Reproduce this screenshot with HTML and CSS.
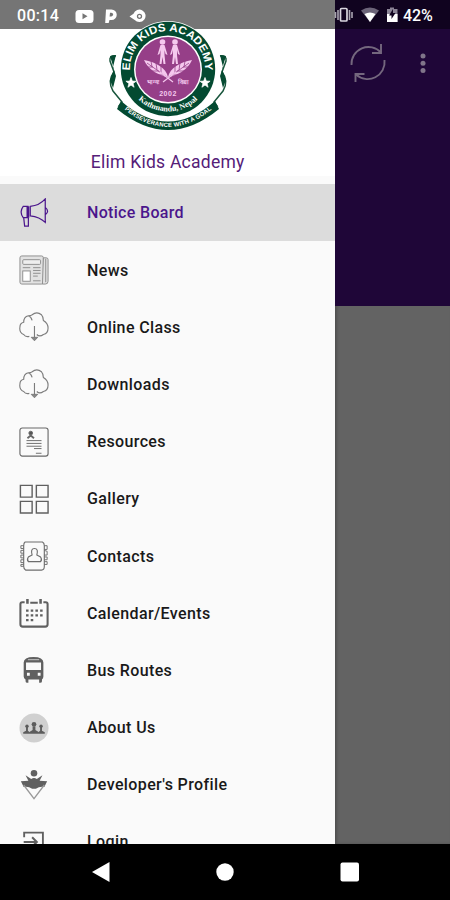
FILE: index.html
```html
<!DOCTYPE html>
<html lang="en">
<head>
<meta charset="utf-8">
<title>Elim Kids Academy</title>
<link rel="stylesheet" href="styles.css">
</head>
<body>
<div class="screen">
  <div class="content">
    <aside class="drawer">
      <div class="status status-left">
        <span class="clock">00:14</span>
        <svg class="notif" width="74" height="18" viewBox="74 6 74 18" fill="#fff">
          <rect x="75.500" y="9" width="18" height="13" rx="3.500"/><path d="M82.500 12.300v6l5-3z" fill="#757575"/>
          <path d="M106 8.500h5.500a5 5 0 0 1 0 10.500h-2l-.8 3h-3.500z"/><path d="M110 11.800h1.300a1.600 1.600 0 0 1 0 3.600h-1.700z" fill="#757575"/>
          <path d="M129.500 15.500l4-2.800a6.200 6.200 0 1 1 1.200 6.200z"/><circle cx="139.500" cy="15.300" r="2" fill="none" stroke="#757575" stroke-width="1.300"/>
        </svg>
      </div>
      <header class="brand">
        <svg class="logo" width="136" height="120" viewBox="100 15 136 120">
          <defs>
            <path id="name-arc" d="M136 89A37.500 37.500 0 1 1 199 89"/>
            <path id="place-arc" d="M130 88A42.500 42.500 0 0 0 206 88"/>
            <path id="motto-arc" d="M119 105Q168 149 217 105"/>
            <g id="child"><circle cx="0" cy="0" r="2.800"/><path d="M-2 3h4l3 10-2-1-1-4v5l1 9H1l-1-7-1 7h-2l1-9V8l-1 4-2 1z"/></g>
            <g id="feather"><path d="M0 0C-8-1-20-7-24-17C-12-15-2-9 0 0z"/><path d="M3 3L-21-14M-17-16l1 6m4-4l1 7m4-4v7M-21-10l6 0m-1 4h7m-2 4h7" stroke="#963f88" stroke-width=".8" fill="none"/><path d="M5 5L-8-5" stroke="#f5c9ee" stroke-width="1.200"/></g>
          </defs>
          <path d="M116 56q-7-1-6 5l4 11q-7 9-1 19l9 11-3 4 8 1M220 56q7-1 6 5l-4 11q7 9 1 19l-9 11 3 4-8 1" fill="#fff" stroke="#18553c" stroke-width="1.500"/>
          <path d="M116 55l-6 1 4 13-4 11 3 8 3-12-3-9zM220 55l6 1-4 13 4 11-3 8-3-12 3-9z" fill="#064b32"/>
          <path d="M121 101Q168 142 215 101L219 109Q168 151 117 109z" fill="#034a31"/>
          <circle cx="168" cy="69" r="48" fill="#fff"/>
          <circle cx="168" cy="69" r="47.200" fill="#034a31"/>
          <circle cx="168" cy="69.500" r="34" fill="#fff"/>
          <circle cx="168" cy="69.500" r="32.500" fill="#963f88"/>
          <text class="logo-name"><textPath href="#name-arc" startOffset="50%" text-anchor="middle" textLength="121" lengthAdjust="spacingAndGlyphs">ELIM KIDS ACADEMY</textPath></text>
          <text class="logo-place"><textPath href="#place-arc" startOffset="50%" text-anchor="middle">Kathmandu, Nepal</textPath></text>
          <text class="logo-motto"><textPath href="#motto-arc" startOffset="50%" text-anchor="middle" textLength="96">PERSEVERANCE WITH A GOAL</textPath></text>
          <path d="M131 77.500l1.300 3.600 3.800.1-3 2.400 1 3.700-3.100-2.200-3.100 2.200 1-3.700-3-2.400 3.800-.1zM205 77.500l1.300 3.600 3.800.1-3 2.400 1 3.700-3.100-2.200-3.100 2.200 1-3.700-3-2.400 3.800-.1z" fill="#fff" stroke="#fff" stroke-width=".7"/>
          <g fill="#f5c9ee"><use href="#child" x="162.500" y="42"/><use href="#child" x="175" y="42"/>
          <use href="#feather" transform="translate(168 77)"/><use href="#feather" transform="matrix(-1 0 0 1 168 77)"/></g>
          <text class="logo-small" x="153" y="84">भाग्यः</text><text class="logo-small" x="183" y="84">विद्या</text>
          <text class="logo-year" x="168" y="95.500">2002</text>
        </svg>
        <h1>Elim Kids Academy</h1>
      </header>
      <nav class="menu">
        <a class="item active"><svg viewBox="0 0 32 32" fill="none" stroke="#4b168c" stroke-width="1.300"><path d="M4.500 9h5v12h-5q-4.500-6 0-12zM12 9q10-1 16-8v25q-6-6-16-7zM28 10q5 4 0 8M5 21l1 9h4v-9"/><path d="M9.500 9v12" stroke-width="3"/></svg><span>Notice Board</span></a>
        <a class="item"><svg viewBox="0 0 32 32" fill="#e2e2e2" stroke="#8c8c8c"><rect x="1" y="1" width="25" height="30" rx="2"/><path d="M26 3h3q2 0 2 2v23q0 3-3 3h-3zM28.500 4v25" /><rect x="4" y="5" width="19" height="5" rx="1" fill="#eee"/><rect x="4" y="17" width="8" height="11" fill="#fff"/><path d="M4 13.500h8m3 0h8m-8 3h8m-8 3h8m-8 3h5m-5 5h8"/></svg><span>News</span></a>
        <a class="item"><svg viewBox="0 0 32 32" fill="none" stroke="#7c7c7c"><use href="#cloud"/></svg><span>Online Class</span></a>
        <a class="item"><svg viewBox="0 0 32 32" fill="none" stroke="#7c7c7c"><g id="cloud"><path d="M11 26q-4 1-6-2-5-2-4-8 0-4 4-5 0-6 5-7 3 0 4-1 5-4 10 0 2 2 2 6 5 3 5 8 0 6-5 7-4 3-7 0M10 4q3 1 4 5M16.500 15v14" stroke-width="1.200"/><path d="M13 27l3.500 3.700L20 27z" fill="#888"/></g></svg><span>Downloads</span></a>
        <a class="item"><svg viewBox="0 0 32 32" fill="none" stroke="#686868"><rect x="1" y="1" width="30" height="30" rx="2.500" stroke-width="1.200"/><circle cx="12.500" cy="6.500" r="2" fill="#555"/><path d="M9 12l3.500-3 3.500 3" stroke-width="2"/><path d="M8 14.500h16m-16 3h16m-16 3h16m-8 2.500h8m-6 5h6"/></svg><span>Resources</span></a>
        <a class="item"><svg viewBox="0 0 32 32" fill="none" stroke="#606060" stroke-width="1.500"><path d="M1.500 1.500h12.500v12.500H1.500zM18.500 1.500h12.500v12.500H18.500zM1.500 18.500h12.500v12.500H1.500zM18.500 18.500h12.500v12.500H18.500z"/></svg><span>Gallery</span></a>
        <a class="item"><svg viewBox="0 0 32 32" fill="none" stroke="#6d6d6d"><path d="M6.500 1H25q2 1 2 4v22q0 4-3 4H7q-2-1-2-4V5q0-3 1.500-4z" stroke-width="1.200"/><path d="M5 5H2v3h3M5 10H2v3h3M5 15H2v3h3M5 20H2v3h3M5 25H2v2h3M27 5h3v4h-3M27 10l3 1v4h-3M27 17h3v3h-3M27 22h3v3h-3"/><path d="M14 15q-2-7 2.500-7t2.500 7l4 2q2 3 0 5H10q-2-2 0-5z" stroke-width="1.200"/></svg><span>Contacts</span></a>
        <a class="item"><svg viewBox="0 0 32 32" fill="none" stroke="#606060"><path d="M6 4.500H3.500q-2 0-2 2V28q0 2.500 2.500 2.500h24q2.500 0 2.500-2.500V6.500q0-2-2-2H26M12 5h8" stroke-width="2.200"/><path d="M9 1v5M23 1v5" stroke-width="2.700"/><path d="M7.500 13.500h18M7.500 18.500h18M7.500 23.500h8" stroke-width="2.400" stroke-dasharray="2.700 2.300"/></svg><span>Calendar/Events</span></a>
        <a class="item"><svg viewBox="0 0 32 32"><path fill="#606060" d="M5 8q0-6 10.500-6T26 8v15q0 2-1.500 3v2q0 2-3 1.500V26H10v3.500q-3 .5-3-1.500v-2Q5 25 5 23z"/><path fill="#fafafa" d="M7.500 8h16v8h-16zM8.500 19h3v3h-3zm11.500 0h3v3h-3z"/><path stroke="#ccc" d="M9.500 5h12"/></svg><span>Bus Routes</span></a>
        <a class="item"><svg viewBox="0 0 32 32"><circle cx="16" cy="16" r="15.500" fill="#d0d0d0"/><g fill="#5c5c5c"><circle cx="16" cy="12" r="2.500"/><circle cx="8.500" cy="14" r="1.800"/><circle cx="23.500" cy="14" r="1.800"/><path d="M14.500 14h3v4l3 2v2h-9v-2l3-2zM7.500 15h2v4l2 1.500V22H4.500v-1.500l3-1.500zM22.500 15h2v4l3 1.500V22h-7v-1.500l2-1.500z"/></g></svg><span>About Us</span></a>
        <a class="item"><svg viewBox="0 0 32 32"><g fill="#606060"><circle cx="16" cy="3.500" r="3.500"/><path d="M7 5.500l6 4q3-2 6 0l6-4-3 6 8 .5-3 6q-5-1-9 2h-4q-4-3-9-2l-3-6 8-.5z"/></g><path d="M5 16l11 14.500L27 16" fill="none" stroke="#999" stroke-width="1.400"/></svg><span>Developer's Profile</span></a>
        <a class="item"><svg viewBox="0 0 32 32" fill="none" stroke="#606060" stroke-width="2"><path d="M5.500 11V6h20v20h-20v-5"/><path d="M5 16h14m-5-5l5 5-5 5" stroke-width="2.200"/></svg><span>Login</span></a>
      </nav>
    </aside>
    <main class="behind">
      <div class="status status-right">
        <svg width="68" height="18" viewBox="332 6 68 18">
          <path d="M335.500 12v6M338 10v10M349.500 10v10M352 12v6" stroke="#aaa6b2" stroke-width="1.600"/><rect x="340.500" y="8.500" width="6.500" height="12.500" rx="1" fill="none" stroke="#d9d6df" stroke-width="1.700"/>
          <path d="M361 10.500q9-6 18 0l-9 11.500z" fill="#6c6479"/><path d="M364.500 14q5.500-3 11 0L370 22z" fill="#fff"/>
          <path d="M387 9h3V7.500h4V9h3.500v13H387z" fill="#8b8496"/><path d="M387 14h10.500v8H387z" fill="#fff"/><path d="M393 9l-4 6.500h2.500V19l4-6h-2.500z" fill="#10031f"/>
        </svg>
        <span class="battery">42%</span>
      </div>
      <div class="toolbar">
        <svg width="40" height="40" viewBox="0 0 40 40" fill="none" stroke="#74677e" stroke-width="1.900"><path d="M3.500 22A17 17 0 0 1 33 9.500M36.500 17A17 17 0 0 1 8 31.500"/><path d="M33 1v9h-9M7.500 39v-8h9"/></svg>
        <svg width="6" height="22" viewBox="0 0 6 22" fill="#80758a"><circle cx="3" cy="3" r="2.500"/><circle cx="3" cy="10.300" r="2.500"/><circle cx="3" cy="17.600" r="2.500"/></svg>
      </div>
    </main>
  </div>
  <footer class="navbar">
    <svg width="18" height="20" viewBox="0 0 18 20" fill="#fff"><path d="M17.500 0v20L0 10z"/></svg>
    <svg width="18" height="18" viewBox="0 0 18 18" fill="#fff"><circle cx="9" cy="9" r="8.700"/></svg>
    <svg width="20" height="20" viewBox="0 0 20 20" fill="#fff"><rect x=".5" y=".5" width="18.500" height="19" rx="2"/></svg>
  </footer>
</div>
</body>
</html>
```
FILE: styles.css
```css
* { box-sizing: border-box; }
body { margin: 0; font-family: Roboto, sans-serif; background: #000; }
svg { display: block; flex: none; }
.screen { width: 450px; height: 900px; display: flex; flex-direction: column; overflow: hidden; }
.content { display: flex; height: 844px; overflow: hidden; }
.drawer { width: 335.4px; height: 844px; flex: none; background: #fafafa; overflow: hidden; }
.status { height: 29px; display: flex; align-items: center; color: #fff; padding-top: 2px; }
.status-left { background: #757575; padding-left: 17px; }
.clock { width: 57px; font-size: 16px; font-weight: 500; letter-spacing: .3px; }
.brand { height: 154.6px; background: #fff; display: flex; flex-direction: column; align-items: center; border-bottom: 8px solid #fafafa; }
.logo { position: relative; top: -14px; margin-bottom: -14px; }
.brand h1 { margin: 16px 0 0; font-size: 17.5px; line-height: 22px; font-weight: 400; color: #552078; letter-spacing: .25px; }
.logo-name { font: 700 11px "Liberation Sans", sans-serif; fill: #fff; }
.logo-place { font: 700 8px "Liberation Serif", serif; fill: #fff; }
.logo-motto { font: 700 6px "Liberation Sans", sans-serif; fill: #fff; }
.logo-small { font: 700 6px sans-serif; fill: #f5c9ee; text-anchor: middle; }
.logo-year { font: 700 7px "Liberation Sans", sans-serif; fill: #f5c9ee; text-anchor: middle; letter-spacing: .5px; }
.item { height: 57.200px; display: flex; align-items: center; gap: 38.5px; padding: 1.4px 0 0 18.500px; font-size: 16px; font-weight: 500; letter-spacing: .38px; color: #191919; }
.item svg { width: 30px; height: 30px; }
.item.active { background: #dcdcdc; color: #4b168c; letter-spacing: .32px; }
.behind { flex: 1; background: #636363; box-shadow: inset 2px 0 3px #0003; }
.status-right { margin-left: -3.500px; position: relative; padding: 0; background: linear-gradient(90deg, #757575 3.500px, #10031f 3.500px); }
.battery { margin-left: 3px; padding-top: 2px; font-size: 16px; font-weight: 500; }
.toolbar { height: 277px; background: #1f0638; display: flex; align-items: flex-start; padding: 14px 0 0 13px; gap: 32px; }
.toolbar svg:last-child { margin-top: 10px; }
.navbar { height: 56px; background: #000; display: flex; align-items: center; padding: 0 90px 0 92px; justify-content: space-between; }
```
